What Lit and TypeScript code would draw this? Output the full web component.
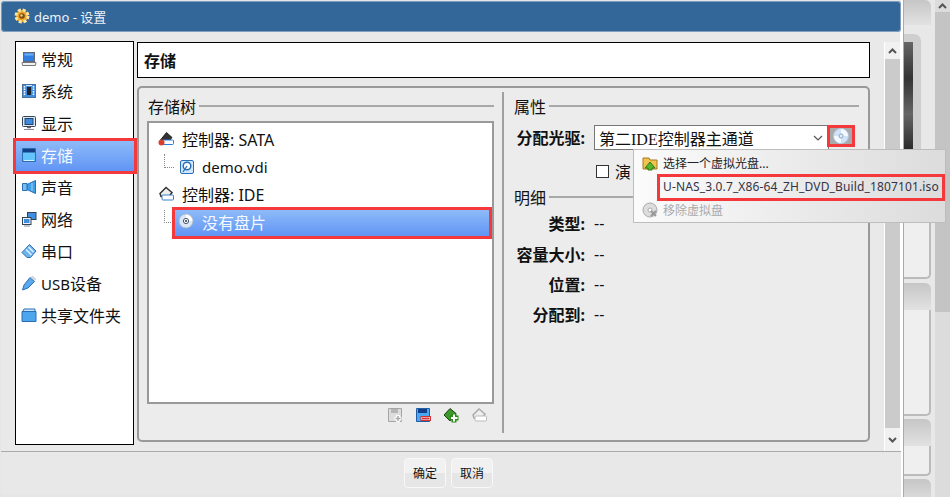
import { LitElement, html, css, svg } from "lit";
import { customElement } from "lit/decorators.js";

const ico = (body: unknown) => html`<svg class="ico" viewBox="0 0 16 16" width="16" height="16">${body}</svg>`;
const icons: Record<string, unknown> = {
  general: svg`<rect x="2.500" y="1.500" width="11" height="9" fill="#2f7fe0" stroke="#667"/><path d="M3.500 2.500h9v2h-9z" fill="#6fb0f2"/><path d="M1 11.500h14l-.5 3H1.500z" fill="#f2f2f2" stroke="#777"/>`,
  system: svg`<rect x="1.500" y="1.500" width="13" height="13" fill="#3f8fe0" stroke="#4a6f9a"/><rect x="6" y="4" width="4" height="8" fill="#1c2430"/><path d="M3.500 3v10M12.500 3v10" stroke="#fff" stroke-width="1.500" stroke-dasharray="1.500 1"/><path d="M5 2.500h6" stroke="#cfe6fb"/>`,
  display: svg`<rect x="1.500" y="1.500" width="13" height="10" rx="1" fill="#dfe8f5" stroke="#345"/><rect x="4" y="3.500" width="8" height="6" fill="#3d8ae0" stroke="#246"/><path d="M6 12.500h4" stroke="#667" stroke-width="1.500"/><path d="M3 14.500h10" stroke="#889"/>`,
  storage: svg`<path d="M1.500 1.500h13v13h-13z" fill="#62c4fb" stroke="#2a6fb5"/><rect x="2" y="2" width="12" height="3.500" fill="#123f88"/><path d="M3 13.500h10" stroke="#d8f2ff"/>`,
  audio: svg`<path d="M6 5.500L14.500 1.500v13L6 10.500z" fill="#3f9fe8" stroke="#2a6fb5"/><path d="M1.500 4.500H6v7H1.500z" fill="#79bdf0" stroke="#2a6fb5"/><path d="M11 4v8" stroke="#a8d6f7"/>`,
  network: svg`<rect x="6.500" y="1.500" width="8.500" height="7" fill="#3f8fe0" stroke="#345"/><rect x="1.500" y="6.500" width="8.500" height="7" fill="#eef" stroke="#345"/><rect x="3" y="8" width="5.500" height="4" fill="#3f8fe0"/><path d="M3 15h6" stroke="#889"/>`,
  serial: svg`<path d="M1 9.500l7.500-8 6.500 6.500-5.500 6.500H6z" fill="#6db4ee" stroke="#2a6fb5"/><path d="M5 6.500l5.500 5.500M7.500 4l5 5" stroke="#e6f3ff" stroke-width="1.500"/>`,
  usb: svg`<path d="M1.500 15l1.500-5 6-7.500 4.500 4-6.500 6.500z" fill="#5aa8ee" stroke="#2a6fb5"/><path d="M10.500 1.500l4 3.500" stroke="#d4d4dc" stroke-width="2.500"/>`,
  folder: svg`<path d="M1 4.500h14v10H1z" fill="#4da6ec" stroke="#2a6fb5"/><path d="M2 4l1-2h11v2" fill="#c7e4fa" stroke="#2a6fb5"/>`,
  sata: svg`<path d="M2.500 9l6-7.500 5.500 5-3 3.500z" fill="#333" stroke="#222"/><rect x="4" y="9" width="11.500" height="4.500" rx="1" fill="#fff" stroke="#2a7fd0"/><circle cx="3.500" cy="11.500" r="3" fill="#d8402c"/>`,
  ide: svg`<path d="M2 7.500l6-6 6 5-3 4H3z" fill="#eee" stroke="#333" stroke-width="1.500"/><rect x="4" y="9" width="11.500" height="5" rx="1" fill="#fff" stroke="#3a80c8"/>`,
  vdi: svg`<rect x="1.500" y="1.500" width="13" height="13" rx="1.500" fill="#cfe8ff" stroke="#2a6fb5"/><circle cx="8" cy="7" r="3.800" fill="#fff" stroke="#2a6fb5" stroke-width="1.500"/><path d="M4 13l4-6" stroke="#2a6fb5" stroke-width="1.300"/>`,
  disc: svg`<circle cx="8" cy="8" r="7" fill="#dbe7f6" stroke="#a9bad0"/><path d="M8 1.500A6.500 6.500 0 0 1 14.500 8H11A3 3 0 0 0 8 5z" fill="#fff"/><circle cx="8" cy="8" r="2.600" fill="#fff" stroke="#456"/><circle cx="8" cy="8" r="1" fill="#235"/>`,
  discLight: svg`<circle cx="8" cy="8" r="7.500" fill="#cfe2f8" stroke="#b8c8dc"/><path d="M8 1A7 7 0 0 1 15 8H10.500A2.500 2.500 0 0 0 8 5.500z" fill="#f4f9ff"/><path d="M8 15A7 7 0 0 1 1 8H5.500A2.500 2.500 0 0 0 8 10.500z" fill="#f4f9ff"/><circle cx="8" cy="8" r="2" fill="#e8f0fa" stroke="#8fa6c2"/>`,
  open: svg`<path d="M1 3h6l1 2h7v9H1z" fill="#f2c24e" stroke="#a67a1e"/><path d="M3 13l5-6 5 6h-3v2H6v-2z" fill="#53b82e" stroke="#2e7d16"/>`,
  remove: svg`<circle cx="8" cy="8" r="7" fill="#ddd" stroke="#aaa"/><circle cx="8" cy="8" r="2" fill="#fff" stroke="#aaa"/><path d="M9 9l5 5M14 9l-5 5" stroke="#999" stroke-width="2"/>`,
  addAttachment: svg`<path d="M1.500 1.500h13v13h-13z" fill="#ddd" stroke="#a5a5a5"/><rect x="4" y="2" width="7" height="4" fill="#b5b5b5"/><path d="M11 8v7M7.500 11.500h7" stroke="#fff" stroke-width="3.500"/><path d="M11 9v5M8.500 11.500h5" stroke="#aaa" stroke-width="1.500"/>`,
  removeAttachment: svg`<path d="M1.500 1.500h13v13h-13z" fill="#4aa8f0" stroke="#1f5fa8"/><rect x="3" y="2" width="9" height="4" fill="#123f88"/><rect x="6" y="9.500" width="9.500" height="4" fill="#fff" stroke="#c33"/><path d="M7 11.500h7.500" stroke="#d33" stroke-width="2"/>`,
  addController: svg`<path d="M1 8l6-6.500 6 5-6 7.500z" fill="#3a9a28" stroke="#1c3d12"/><path d="M11 7v8.500M7 11h8.500" stroke="#2e8a1c" stroke-width="5"/><path d="M11 7.500v7M8 11h6.500" stroke="#fff" stroke-width="2"/>`,
  removeController: svg`<path d="M2 8l6-6 6 5-3 4H3z" fill="#eee" stroke="#aaa" stroke-width="1.500"/><rect x="4" y="9" width="11.500" height="5" rx="1" fill="#fff" stroke="#bbb"/>`,
};

@customElement("app-root")
export class AppRoot extends LitElement {
  static styles = css`
    :host { display: block; width: 950px; height: 497px; overflow: hidden; background: #e6e6e6;
      font-family: "Noto Sans", "Noto Sans CJK SC", sans-serif; font-size: 16px; color: #111; position: relative; }
    .ico { display: block; flex: none; }
    .lat { font-size: 15px; }
    .desk { display: flex; height: 497px; }
    .win { width: 900px; height: 493px; margin: 1px 0 0 1px; display: flex; flex-direction: column; flex: none;
      background: #e9e9e9; border-radius: 4px; }
    .title { height: 31px; flex: none; background: #336699; border-radius: 4px; color: #eef3f8; display: flex;
      align-items: center; gap: 4px; padding: 0 0 1px 13px; box-sizing: border-box; font-size: 13px; box-shadow: inset 0 0 0 1px #7f9fbf; }
    .gear { width: 16px; height: 16px; }
    .body { flex: 1; display: flex; min-height: 0; }
    .content { flex: 1; display: flex; gap: 3px; padding: 9px 0 0 14px; border-right: 1px solid #fff; }
    .side { width: 117px; height: 400px; border: 1px solid #000; background: #fff; padding-top: 2px; }
    .nav { height: 32px; box-sizing: border-box; display: flex; align-items: center; gap: 4px; padding: 0 0 3px 5px; white-space: nowrap; }
    .nav.sel { background: linear-gradient(#8fbcf8, #5f93f5); color: #f4f8ff; outline: 3px solid #f5383c; outline-offset: -1px; margin: 0 -2px 0 -1px; padding-left: 6px; position: relative; }
    .main { width: 733px; display: flex; flex-direction: column; gap: 8px; margin-top: 1px; }
    .head { height: 34px; border: 1px solid #000; background: #fff; font-weight: 700; padding-left: 6px; display: flex; align-items: center; }
    .group { height: 352px; box-sizing: content-box; border: 2px solid #999; border-radius: 5px; background: #ececec; display: flex; padding: 0 9px 0 8px; }
    .left { width: 347px; display: flex; flex-direction: column; padding-top: 5px; }
    .legend { display: flex; align-items: center; gap: 3px; height: 26px; flex: none; white-space: nowrap; padding-left: 1px; }
    .legend::after { content: ""; flex: 1; height: 2px; background: #a8a8a8; }
    .tree { height: 283px; box-sizing: border-box; margin-top: 2px; border: 2px solid #999; background: #fff; padding-top: 3px; flex: none; }
    .row { height: 28px; box-sizing: border-box; display: flex; align-items: center; gap: 8px; padding: 0 0 2px 9px; }
    .row.ctl2 { height: 27px; padding-bottom: 3px; }
    .row.child { padding-left: 30px; position: relative; gap: 7px; }
    .row.child::before { content: ""; position: absolute; left: 15px; top: 0; width: 9px; height: 13px; border-left: 1px dotted #888; border-bottom: 1px dotted #888; }
    .row.sel { margin: 0 2px 0 25px; padding-left: 4px; background: linear-gradient(#8fbcf8, #5f93f5); color: #f4f8ff; outline: 3px solid #f5383c; outline-offset: -1px; gap: 8px; }
    .row.child.sel::before { left: -10px; top: 1px; width: 6px; height: 12px; }
    .row.sel .ico { margin-bottom: 3px; }
    .tools { display: flex; justify-content: flex-end; gap: 12px; padding: 3px 7px 0 0; }
    .divider { width: 2px; height: 341px; margin: 4px 9px 0 8px; background: #a0a0a0; flex: none; }
    .right { flex: 1; display: flex; flex-direction: column; min-width: 0; padding-top: 5px; }
    .combo-row { display: flex; align-items: flex-start; margin-top: 6px; height: 25px; }
    .label { font-weight: 700; white-space: nowrap; }
    .combo-row .label { width: 72px; text-align: right; line-height: 26px; }
    .combo { width: 235px; height: 25px; margin-left: 9px; flex: none; border: 1px solid #777; background: #fff; display: flex; align-items: center; justify-content: space-between; padding: 0 5px 0 4px; box-sizing: border-box; font-family: "Liberation Serif", "Noto Sans CJK SC", serif; font-size: 16px; }
    .chev { width: 10px; height: 6px; }
    .cdbtn { width: 28px; height: 22px; flex: none; margin-left: -2px; box-sizing: border-box; position: relative; background: #a9a9a9; border: 3px solid #f5383c; display: flex; align-items: center; justify-content: center; }
    .check { display: flex; align-items: center; gap: 6px; margin: 9px 0 0 83px; height: 24px; }
    .box { width: 11px; height: 11px; border: 1px solid #333; background: #fff; flex: none; }
    .legend2 { margin-top: 1px; }
    .kv { display: grid; grid-template-columns: 72px 1fr; column-gap: 9px; margin-top: -2px; }
    .kv > div { height: 30.4px; display: flex; align-items: center; }
    .kv .label { justify-content: flex-end; }
    .scroll { width: 15px; flex: none; display: flex; flex-direction: column; background: #f1f1f1; margin: 1px 0 0 11px; border-left: 1px solid #fff; }
    .scroll .thumb { flex: 1; background: #cbcbcb; }
    .arrow { height: 17px; display: flex; align-items: center; justify-content: center; flex: none; }
    .arrow.down { height: 23px; }
    .foot { height: 43px; flex: none; border-top: 1px solid #aaa; background: #e8e8e8; display: flex; justify-content: center; align-items: center; gap: 5px; padding-right: 5px; box-sizing: border-box; }
    .btn { width: 42px; height: 30px; border-radius: 4px; background: linear-gradient(#f1f1f1 50%, #e6e6e6 50%); border: 1px solid #f8f8f8; display: flex; align-items: center; justify-content: center; font-size: 12px; box-sizing: border-box; }
    .menu { position: absolute; left: 633px; top: 149px; width: 313px; height: 74px; background: linear-gradient(90deg, #fbfbfb, #dcdcdc); border: 1px solid #bdbdbd; box-sizing: border-box; font-size: 12px; padding-top: 1px; }
    .item { height: 24px; display: flex; align-items: center; gap: 5px; padding-left: 8px; white-space: nowrap; color: #222; }
    .item.iso { height: 27px; margin: -1px 0 -3px 23px; padding: 0 0 3px 3px; box-sizing: border-box; border: 3px solid #f5383c; color: #334; letter-spacing: .14px; position: relative; }
    .sep { height: 1px; background: #ccc; margin: 0 2px 0 24px; }
    .item.off { color: #aaa; height: 22px; }
    .bg { flex: 1; position: relative; background: #e8e8e8; }
    .bgwhite { position: absolute; left: 0; top: 0; bottom: 0; width: 2px; background: #fff; }
    .bgline { position: absolute; left: 2px; top: 0; bottom: 0; width: 1px; background: #aaa; }
    .bgstrip { position: absolute; left: 3px; width: 27px; border-right: 2px solid #bbb; border-bottom: 2px solid #bbb; border-radius: 0 0 5px 0; box-sizing: border-box; background: #efefef; }
    .tab { background: linear-gradient(#c6c6c6, #e2e2e2); border: 0; border-radius: 0 6px 0 0; height: 27px; }
    .shell { position: absolute; left: 3px; top: 34px; width: 17px; height: 190px; background: #cfcfcf; border-radius: 0 7px 0 0; }
    .dark { position: absolute; left: 3px; top: 42px; width: 9px; height: 180px; background: linear-gradient(#666, #333 20%, #666 40%, #2a2a2a 60%, #333); }
    .bgscroll { position: absolute; left: 34px; top: 0; width: 15px; height: 100%; background: #dcdcdc; }
    .bgscroll .t { height: 300px; background: #c4c4c4; }
  `;

  nav(icon: string, label: unknown, sel = false) {
    return html`<div class="nav ${sel ? "sel" : ""}">${ico(icons[icon])}<span>${label}</span></div>`;
  }

  render() {
    const chevUp = html`<svg width="9" height="6" viewBox="0 0 9 6"><path d="M1 5l3.500-3.500L8 5" fill="none" stroke="#555" stroke-width="2"/></svg>`;
    const chevDown = html`<svg width="9" height="6" viewBox="0 0 9 6"><path d="M1 1l3.500 3.500L8 1" fill="none" stroke="#555" stroke-width="2"/></svg>`;
    return html`
      <div class="desk">
        <div class="win">
          <div class="title">
            <svg class="gear" viewBox="0 0 16 16"><circle cx="8" cy="8" r="6" fill="#e8a62c" stroke="#fbe3a0" stroke-width="3" stroke-dasharray="3 1.700"/><circle cx="8" cy="8" r="2.800" fill="#7a4a10"/><circle cx="7.500" cy="7.500" r="1.200" fill="#f6d27a"/></svg>
            <span>demo - 设置</span>
          </div>
          <div class="body">
            <div class="content">
              <div class="side">
                ${this.nav("general", "常规")}
                ${this.nav("system", "系统")}
                ${this.nav("display", "显示")}
                ${this.nav("storage", "存储", true)}
                ${this.nav("audio", "声音")}
                ${this.nav("network", "网络")}
                ${this.nav("serial", "串口")}
                ${this.nav("usb", html`<span class="lat">USB</span>设备`)}
                ${this.nav("folder", "共享文件夹")}
              </div>
              <div class="main">
                <div class="head">存储</div>
                <div class="group">
                  <div class="left">
                    <div class="legend">存储树</div>
                    <div class="tree">
                      <div class="row">${ico(icons.sata)}<span>控制器: SATA</span></div>
                      <div class="row child">${ico(icons.vdi)}<span class="lat">demo.vdi</span></div>
                      <div class="row ctl2">${ico(icons.ide)}<span>控制器: IDE</span></div>
                      <div class="row child sel">${ico(icons.disc)}<span>没有盘片</span></div>
                    </div>
                    <div class="tools">
                      ${ico(icons.addAttachment)}${ico(icons.removeAttachment)}${ico(icons.addController)}${ico(icons.removeController)}
                    </div>
                  </div>
                  <div class="divider"></div>
                  <div class="right">
                    <div class="legend">属性</div>
                    <div class="combo-row">
                      <div class="label">分配光驱:</div>
                      <div class="combo"><span>第二IDE控制器主通道</span>
                        <svg class="chev" viewBox="0 0 10 6"><path d="M1 1l4 4 4-4" fill="none" stroke="#555" stroke-width="1.200"/></svg>
                      </div>
                      <div class="cdbtn">${ico(icons.discLight)}</div>
                    </div>
                    <div class="check"><span class="box"></span><span>演</span></div>
                    <div class="legend legend2">明细</div>
                    <div class="kv">
                      <div class="label">类型:</div><div>--</div>
                      <div class="label">容量大小:</div><div>--</div>
                      <div class="label">位置:</div><div>--</div>
                      <div class="label">分配到:</div><div>--</div>
                    </div>
                  </div>
                </div>
              </div>
              <div class="scroll">
                <div class="arrow">${chevUp}</div>
                <div class="thumb"></div>
                <div class="arrow down">${chevDown}</div>
              </div>
            </div>
          </div>
          <div class="foot">
            <div class="btn">确定</div>
            <div class="btn">取消</div>
          </div>
        </div>
        <div class="bg">
          <div class="bgwhite"></div>
          <div class="bgline"></div>
          <div class="bgstrip tab" style="top:0;height:25px"></div>
          <div class="shell"></div>
          <div class="dark"></div>
          <div class="bgstrip" style="top:223px;height:56px"></div>
          <div class="bgstrip tab" style="top:283px"></div>
          <div class="bgstrip" style="top:310px;height:106px"></div>
          <div class="bgstrip tab" style="top:419px"></div>
          <div class="bgstrip" style="top:446px;height:30px"></div>
          <div class="bgstrip tab" style="top:479px"></div>
          <div class="bgscroll"><div class="arrow" style="height:12px">${chevUp}</div><div class="t"></div></div>
        </div>
      </div>
      <div class="menu">
        <div class="item">${ico(icons.open)}<span>选择一个虚拟光盘...</span></div>
        <div class="item iso"><span>U-NAS_3.0.7_X86-64_ZH_DVD_Build_1807101.iso</span></div>
        <div class="sep"></div>
        <div class="item off">${ico(icons.remove)}<span>移除虚拟盘</span></div>
      </div>
    `;
  }
}
